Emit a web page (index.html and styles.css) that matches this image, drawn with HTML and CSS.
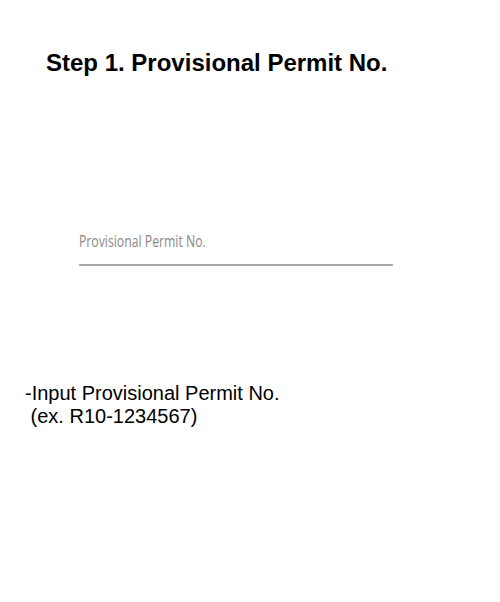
FILE: index.html
```html
<!DOCTYPE html>
<html>
<head>
<meta charset="utf-8">
<link rel="stylesheet" href="styles.css">
</head>
<body>
<div class="page">
  <h1 class="title">Step 1. Provisional Permit No.</h1>
  <div class="field">
    <span class="placeholder">Provisional Permit No.</span>
  </div>
  <p class="note">-Input Provisional Permit No.<br>&nbsp;(ex. R10-1234567)</p>
</div>
</body>
</html>
```
FILE: styles.css
```css
html, body {
  margin: 0;
  padding: 0;
  background: #fff;
}
.page {
  width: 500px;
  height: 602px;
  font-family: "Liberation Sans", Arial, sans-serif;
  color: #000;
}
.title {
  margin: 0;
  padding: 49px 0 0 46px;
  font-size: 24px;
  font-weight: bold;
  line-height: 28px;
}
.field {
  margin: 152px 0 0 79px;
  width: 314px;
  border-bottom: 2px solid #a8a8a8;
  height: 35px;
}
.placeholder {
  display: inline-block;
  font-family: "Open Sans", sans-serif;
  font-size: 17px;
  color: #8a8a8a;
  transform-origin: left center;
  transform: scaleX(0.72);
  line-height: 24px;
  white-space: nowrap;
}
.note {
  margin: 116px 0 0 25px;
  font-size: 20px;
  line-height: 23px;
}
```
